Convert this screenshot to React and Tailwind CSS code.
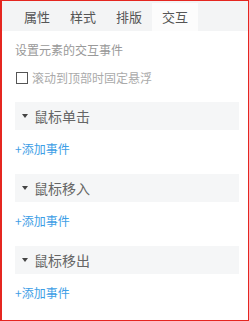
const tabs = ["属性", "样式", "排版", "交互"];
const events = ["鼠标单击", "鼠标移入", "鼠标移出"];

const font = { fontFamily: '"Noto Sans CJK SC", "Noto Sans", sans-serif' };

const EventSection = ({ title, first }) => {
    return (
        <div className={first ? "mt-[14px]" : "mt-[15px]"}>
            <div className="flex h-[28px] items-center bg-[#f5f6f7] pl-[7px]">
                <span className="h-0 w-0 border-x-[3px] border-t-[4px] border-x-transparent border-t-[#444]"></span>
                <span className="ml-[6px] text-[14px] leading-5 text-[#666]">
                    {title}
                </span>
            </div>
            <div className="mt-[9px] h-5 text-[12px] leading-5 text-[#3d9ee6]">
                +添加事件
            </div>
        </div>
    );
};

export default function App() {
    return (
        <div
            className="h-[321px] w-[249px] overflow-hidden border-y border-r border-l-2 border-[#e52620] bg-white"
            style={font}
        >
            <div className="flex h-[30px] bg-[#f3f4f5] pl-3 pt-[2px]">
                {tabs.map((tab, index) => (
                    <div
                        key={tab}
                        className={
                            "flex h-[28px] w-[46px] items-center justify-center text-[13px] text-[#555] " +
                            (index === 3 ? "bg-[#fcfcfc]" : "")
                        }
                    >
                        {tab}
                    </div>
                ))}
            </div>
            <div className="pl-[13px] pr-[9px]">
                <div className="mt-[9px] h-5 text-[12px] leading-5 text-[#999]">
                    设置元素的交互事件
                </div>
                <div className="mt-2 flex h-5 items-center">
                    <span className="ml-px h-[12px] w-[12px] border border-[#555] bg-white"></span>
                    <span className="ml-[4px] text-[12px] leading-5 text-[#aaa]">
                        滚动到顶部时固定悬浮
                    </span>
                </div>
                {events.map((title, index) => (
                    <EventSection key={title} title={title} first={index === 0} />
                ))}
            </div>
        </div>
    );
}
